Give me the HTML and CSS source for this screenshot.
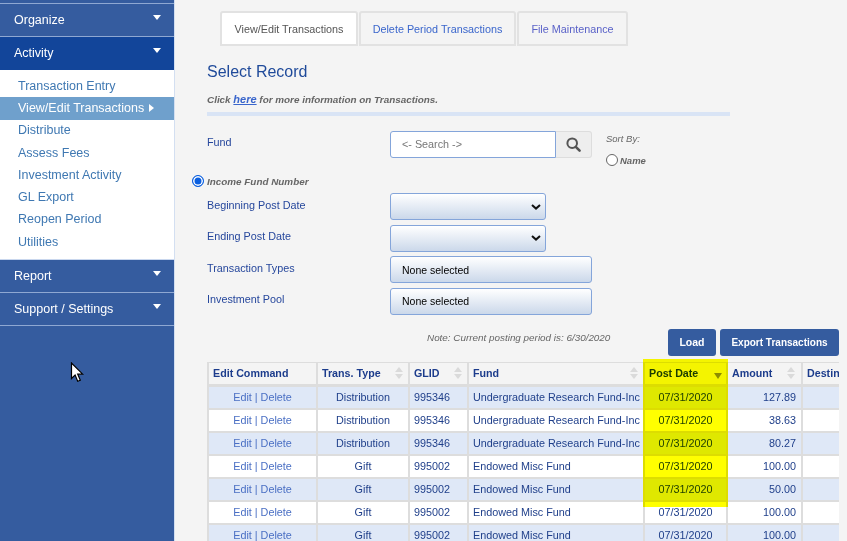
FILE: index.html
```html
<!DOCTYPE html>
<html lang="en">
<head>
<meta charset="utf-8">
<title>View/Edit Transactions</title>
<link rel="stylesheet" href="styles.css">
</head>
<body>
<div class="app">
  <aside class="sidebar">
    <div class="nav-head nav-first"><span>Organize</span><i class="caret"></i></div>
    <div class="nav-head nav-active"><span>Activity</span><i class="caret"></i></div>
    <ul class="submenu">
      <li>Transaction Entry</li>
      <li class="current">View/Edit Transactions<i class="caret-right"></i></li>
      <li>Distribute</li>
      <li>Assess Fees</li>
      <li>Investment Activity</li>
      <li>GL Export</li>
      <li>Reopen Period</li>
      <li>Utilities</li>
    </ul>
    <div class="nav-head"><span>Report</span><i class="caret"></i></div>
    <div class="nav-head"><span>Support / Settings</span><i class="caret"></i></div>
    <svg class="cursor" width="14" height="21" viewBox="0 0 14 21"><path d="M1.5 1v15.5l3.6-3.4 2.6 6.2 2.6-1.1-2.6-6h5z" fill="#fff" stroke="#000" stroke-width="1.2"/></svg>
  </aside>
  <main class="main">
    <div class="tabs">
      <div class="tab tab-on">View/Edit Transactions</div>
      <div class="tab tab-mid">Delete Period Transactions</div>
      <div class="tab tab-end">File Maintenance</div>
    </div>
    <h2 class="title">Select Record</h2>
    <p class="hint">Click <a class="hint-link">here</a> for more information on Transactions.</p>
    <div class="rule"></div>

    <div class="row row-fund">
      <label class="lbl lbl-fund">Fund</label>
      <div class="search">
        <div class="search-input">&lt;- Search -&gt;</div>
        <div class="search-btn"><svg width="16" height="16" viewBox="0 0 16 16"><circle cx="6.2" cy="6.2" r="4.8" fill="none" stroke="#555" stroke-width="2"/><path d="M9.8 9.8l3.8 3.8" stroke="#555" stroke-width="2.6" stroke-linecap="round"/></svg></div>
      </div>
      <div class="sort">
        <div class="sort-title">Sort By:</div>
        <div class="sort-opt"><span class="radio"></span><b>Name</b></div>
      </div>
    </div>
    <div class="income"><span class="radio radio-on"></span><b>Income Fund Number</b></div>

    <div class="row row-select">
      <label class="lbl">Beginning Post Date</label>
      <div class="select"><svg width="10" height="6" viewBox="0 0 10 6"><path d="M1 1l4 3.6L9 1" fill="none" stroke="#111" stroke-width="2"/></svg></div>
    </div>
    <div class="row row-select">
      <label class="lbl lbl-up">Ending Post Date</label>
      <div class="select"><svg width="10" height="6" viewBox="0 0 10 6"><path d="M1 1l4 3.6L9 1" fill="none" stroke="#111" stroke-width="2"/></svg></div>
    </div>
    <div class="row row-select">
      <label class="lbl">Transaction Types</label>
      <div class="multi">None selected</div>
    </div>
    <div class="row row-select">
      <label class="lbl lbl-up">Investment Pool</label>
      <div class="multi">None selected</div>
    </div>

    <div class="actions">
      <span class="note">Note: Current posting period is: 6/30/2020</span>
      <button class="btn btn-load">Load</button>
      <button class="btn btn-export">Export Transactions</button>
    </div>

    <div class="grid-wrap">
      <div class="grid-clip">
        <table class="grid">
          <colgroup>
            <col class="c1"><col class="c2"><col class="c3"><col class="c4"><col class="c5"><col class="c6"><col class="c7">
          </colgroup>
          <thead>
            <tr>
              <th>Edit Command</th>
              <th><div class="th-in">Trans. Type<span class="sort-ic"><i class="up"></i><i class="down"></i></span></div></th>
              <th><div class="th-in">GLID<span class="sort-ic"><i class="up"></i><i class="down"></i></span></div></th>
              <th><div class="th-in">Fund<span class="sort-ic"><i class="up"></i><i class="down"></i></span></div></th>
              <th><div class="th-in">Post Date<span class="sort-ic sort-active"><i class="down"></i></span></div></th>
              <th class="th-amount"><div class="th-in">Amount<span class="sort-ic"><i class="up"></i><i class="down"></i></span></div></th>
              <th>Destination</th>
            </tr>
          </thead>
          <tbody>
            <tr class="alt"><td class="ctr lnk">Edit | Delete</td><td class="ctr">Distribution</td><td>995346</td><td>Undergraduate Research Fund-Inc</td><td class="ctr">07/31/2020</td><td class="num">127.89</td><td></td></tr>
            <tr><td class="ctr lnk">Edit | Delete</td><td class="ctr">Distribution</td><td>995346</td><td>Undergraduate Research Fund-Inc</td><td class="ctr">07/31/2020</td><td class="num">38.63</td><td></td></tr>
            <tr class="alt"><td class="ctr lnk">Edit | Delete</td><td class="ctr">Distribution</td><td>995346</td><td>Undergraduate Research Fund-Inc</td><td class="ctr">07/31/2020</td><td class="num">80.27</td><td></td></tr>
            <tr><td class="ctr lnk">Edit | Delete</td><td class="ctr">Gift</td><td>995002</td><td>Endowed Misc Fund</td><td class="ctr">07/31/2020</td><td class="num">100.00</td><td></td></tr>
            <tr class="alt"><td class="ctr lnk">Edit | Delete</td><td class="ctr">Gift</td><td>995002</td><td>Endowed Misc Fund</td><td class="ctr">07/31/2020</td><td class="num">50.00</td><td></td></tr>
            <tr><td class="ctr lnk">Edit | Delete</td><td class="ctr">Gift</td><td>995002</td><td>Endowed Misc Fund</td><td class="ctr">07/31/2020</td><td class="num">100.00</td><td></td></tr>
            <tr class="alt"><td class="ctr lnk">Edit | Delete</td><td class="ctr">Gift</td><td>995002</td><td>Endowed Misc Fund</td><td class="ctr">07/31/2020</td><td class="num">100.00</td><td></td></tr>
          </tbody>
        </table>
      </div>
      <div class="marker"></div>
    </div>
  </main>
</div>
</body>
</html>
```
FILE: styles.css
```css
* { box-sizing: border-box; }
html, body { margin: 0; padding: 0; height: 541px; overflow: hidden; }
body { font-family: "Liberation Sans", Arial, sans-serif; background: #f4f4f4; }
.app { display: flex; height: 541px; overflow: hidden; }

.sidebar { position: relative; width: 175px; flex: none; background: #355c9f; border-right: 1px solid #d3dff1; padding-top: 3px; }
.nav-head { display: flex; justify-content: space-between; align-items: center; height: 33px; padding: 0 13px 1px 14px; color: #fff; font-size: 12.5px; border-bottom: 1px solid #8fa8d2; }
.nav-first { border-top: 1px solid #8fa8d2; height: 34px; }
.nav-active { background: #12459a; border-bottom: 0; padding-bottom: 2px; }
.caret { width: 0; height: 0; border-left: 4.5px solid transparent; border-right: 4.5px solid transparent; border-top: 5px solid #fff; margin-top: -5px; }
.submenu { list-style: none; margin: 0; padding: 4.5px 0 6px; background: #fff; border-bottom: 1px solid #c9d7ee; height: 190px; }
.submenu li { height: 22.33px; line-height: 22.33px; padding-left: 18px; color: #3f78b2; font-size: 12.5px; white-space: nowrap; }
.submenu .current { background: #6fa0cc; color: #fff; height: 23px; margin-bottom: -0.67px; display: flex; align-items: center; gap: 5px; }
.caret-right { width: 0; height: 0; border-top: 4.5px solid transparent; border-bottom: 4.5px solid transparent; border-left: 5px solid #fff; }
.cursor { position: absolute; left: 70px; top: 362px; }

.main { flex: 1; min-width: 0; padding: 11px 0 0 32px; }
.tabs { display: flex; margin-left: 13px; height: 35px; }
.tab { display: flex; align-items: center; justify-content: center; height: 35px; border: 2px solid #e2e2e2; border-radius: 3px 3px 0 0; font-size: 10.8px; color: #3a66cc; }
.tab-on { width: 138px; background: #fff; color: #555; }
.tab-mid { width: 157px; margin-left: 1px; }
.tab-end { width: 111px; margin-left: 1px; color: #5a62c8; }
.title { margin: 16px 0 0; font-size: 16px; line-height: 20px; font-weight: 400; color: #1f4a9a; }
.hint { margin: 11px 0 0; font-size: 9.9px; line-height: 12px; font-weight: 700; font-style: italic; color: #666; }
.hint-link { color: #3a66cc; text-decoration: underline; font-size: 11px; }
.rule { width: 523px; height: 4px; margin-top: 6px; background: #d9e4f5; }

.row { display: flex; align-items: center; }
.lbl { width: 183px; flex: none; font-size: 10.8px; color: #26479c; margin-top: -3px; }
.lbl-up { margin-top: -5px; }
.row-fund { height: 43px; margin-top: 15px; align-items: flex-start; }
.lbl-fund { margin-top: 5px; line-height: 12px; }
.search { display: flex; width: 202px; height: 27px; }
.search-input { width: 166px; height: 27px; background: #fff; border: 1px solid #84a5da; border-radius: 3px 0 0 3px; padding: 0 11px; line-height: 25px; font-size: 10.8px; color: #777; }
.search-btn { flex: 1; display: flex; align-items: center; justify-content: center; background: #eee; border: 1px solid #ddd; border-left: 0; border-radius: 0 3px 3px 0; }
.sort { margin-left: 14px; color: #666; font-size: 9.5px; font-style: italic; padding-top: 2px; }
.sort-title { line-height: 12px; }
.sort-opt { display: flex; align-items: center; gap: 2px; margin-top: 9px; }
.radio { display: inline-block; width: 12px; height: 12px; flex: none; border-radius: 50%; border: 1px solid #666; background: #fff; }
.radio-on { border: 1.5px solid #0a5fe0; box-shadow: inset 0 0 0 1.5px #fff; background: #0a5fe0; }
.income { display: flex; align-items: center; gap: 3px; height: 13px; margin-left: -15px; font-size: 9.9px; font-style: italic; color: #666; }
.income b { padding-top: 2px; }

.row-select { height: 27px; margin-top: 4.5px; }
.income + .row-select { margin-top: 6px; }
.select { display: flex; align-items: center; justify-content: flex-end; width: 156px; height: 27px; padding-right: 4px; border: 1px solid #84a5da; border-radius: 3px; background: linear-gradient(#fff, #cbd8ea); }
.multi { display: flex; align-items: center; width: 202px; height: 27px; padding-left: 11px; border: 1px solid #84a5da; border-radius: 3px; background: linear-gradient(#fff, #cbd8ea); font-size: 10.5px; color: #000; }

.actions { display: flex; align-items: center; height: 27px; margin-top: 14px; width: 632px; }
.note { margin-left: 220px; font-size: 9.9px; font-style: italic; color: #666; margin-top: -9px; }
.btn { height: 27px; border: 0; border-radius: 3px; background: #355c9f; color: #fff; font: 700 10.5px "Liberation Sans", Arial, sans-serif; padding: 0; }
.btn-load { width: 48px; margin-left: auto; }
.btn-export { width: 119px; margin-left: 4px; font-size: 10px; }

.grid-wrap { position: relative; margin-top: 6px; }
.grid-clip { width: 632px; overflow: hidden; }
.grid { table-layout: fixed; width: 794px; border-collapse: separate; border-spacing: 0; border-left: 2px solid #ddd; border-top: 1px solid #ddd; font-size: 10.8px; color: #1f3f8a; }
.c1 { width: 109px; } .c2 { width: 92px; } .c3 { width: 59px; } .c4 { width: 176px; } .c5 { width: 83px; } .c6 { width: 75px; } .c7 { width: 198px; }
.grid th { height: 24px; padding: 0 5px 0 4px; text-align: left; font-weight: 700; font-size: 10.7px; color: #1c3c8c; background: #f4f4f4; border-right: 2px solid #ddd; border-bottom: 3px solid #ddd; white-space: nowrap; overflow: hidden; }
.grid .th-amount { padding-right: 6px; }
.grid td { height: 23px; padding: 0 4px; background: #fff; border-right: 2px solid #ddd; border-bottom: 2px solid #ddd; white-space: nowrap; }
.grid .alt td { background: #dfe8f7; }
.grid .ctr { text-align: center; }
.grid .num { text-align: right; padding-right: 5px; }
.grid .lnk { color: #4a6fc4; }
.th-in { display: flex; align-items: center; justify-content: space-between; }
.sort-ic { display: flex; flex-direction: column; gap: 2px; }
.sort-ic i { display: block; width: 0; height: 0; border-left: 4px solid transparent; border-right: 4px solid transparent; }
.sort-ic .up { border-bottom: 5px solid #dadada; }
.sort-ic .down { border-top: 5px solid #dadada; }
.sort-active { margin-top: 6px; margin-right: -1px; }
.sort-active .down { border-top: 6px solid #8c8c8c; }
.marker { position: absolute; left: 436px; top: -3px; width: 85px; height: 148px; background: #ff0; mix-blend-mode: multiply; }
```
